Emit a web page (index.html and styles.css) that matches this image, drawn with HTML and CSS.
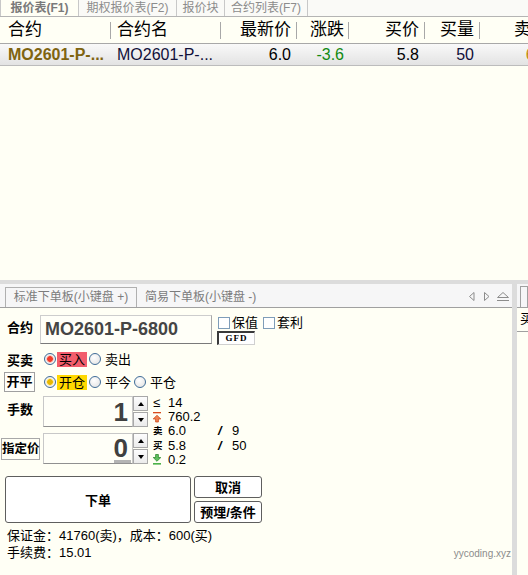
FILE: index.html
```html
<!DOCTYPE html>
<html>
<head>
<meta charset="utf-8">
<link rel="stylesheet" href="styles.css">
</head>
<body>
<div class="quote">
  <div class="qtabs">
    <div class="qtab active">报价表(F1)</div>
    <div class="qtab t2">期权报价表(F2)</div>
    <div class="qtab t3">报价块</div>
    <div class="qtab t4">合约列表(F7)</div>
  </div>
  <div class="qrow qhead">
    <div class="c c1">合约</div>
    <div class="c c2">合约名</div>
    <div class="c c3">最新价</div>
    <div class="c c4">涨跌</div>
    <div class="c c5">买价</div>
    <div class="c c6">买量</div>
    <div class="c c7">卖价</div>
  </div>
  <div class="qrow qdata">
    <div class="c c1 code">MO2601-P-...</div>
    <div class="c c2 name">MO2601-P-...</div>
    <div class="c c3">6.0</div>
    <div class="c c4 down">-3.6</div>
    <div class="c c5">5.8</div>
    <div class="c c6 navy">50</div>
    <div class="c c7 ask">6.0</div>
  </div>
</div>
<div class="band"></div>
<div class="bottom">
  <div class="left">
    <div class="otabs">
      <div class="otab active">标准下单板(小键盘 +)</div>
      <div class="otab t2b">简易下单板(小键盘 -)</div>
      <svg class="arrows" width="41" height="10" viewBox="0 0 41 10">
        <polygon points="6,0.5 6,8.5 1.5,4.5" fill="none" stroke="#8c8c8c" stroke-width="1"/>
        <polygon points="16.5,0.5 16.5,8.5 21,4.5" fill="none" stroke="#8c8c8c" stroke-width="1"/>
        <polygon points="29.5,5.5 35,0.5 40.5,5.5" fill="none" stroke="#8c8c8c" stroke-width="1"/>
        <line x1="29" y1="8.5" x2="41" y2="8.5" stroke="#8c8c8c" stroke-width="1"/>
      </svg>
    </div>
    <div class="form">
      <div class="r1">
        <div class="lbl">合约</div>
        <div class="cinput">MO2601-P-6800</div>
        <div class="opts">
          <div class="chkrow">
            <span class="chk"></span><span class="chklbl">保值</span>
            <span class="chk chk2"></span><span class="chklbl">套利</span>
          </div>
          <div class="gfd">GFD</div>
        </div>
      </div>
      <div class="r2">
        <div class="lbl2">买卖</div>
        <span class="radio on-red"></span><span class="otext hl-red">买入</span>
        <span class="radio g2"></span><span class="otext sp">卖出</span>
      </div>
      <div class="r3">
        <div class="kbtn">开平</div>
        <span class="radio on-yel"></span><span class="otext hl-yel">开仓</span>
        <span class="radio g2"></span><span class="otext sp">平今</span>
        <span class="radio g3"></span><span class="otext sp">平仓</span>
      </div>
      <div class="r4">
        <div class="spins">
          <div class="spin">
            <div class="slbl">手数</div>
            <div class="sinput"><span class="num">1</span></div>
            <div class="sbtns"><div class="sb"><i class="up"></i></div><div class="sb"><i class="dn"></i></div></div>
          </div>
          <div class="spin">
            <div class="slbl2"><div class="zbtn">指定价</div></div>
            <div class="sinput"><span class="num zero">0</span></div>
            <div class="sbtns"><div class="sb"><i class="up"></i></div><div class="sb"><i class="dn"></i></div></div>
          </div>
        </div>
        <div class="info">
          <div class="il"><span class="ic">≤</span><span class="iv">14</span></div>
          <div class="il"><span class="ic"><svg width="8" height="11" viewBox="0 0 8 11"><rect x="0" y="0" width="8" height="1.3" fill="#d84a1c"/><path d="M4 3.2 L7.8 7 H5.4 V10 H2.6 V7 H0.2 Z" fill="#f08050" stroke="#c84010" stroke-width="0.7"/></svg></span><span class="iv">760.2</span></div>
          <div class="il"><span class="ic tiny">卖</span><span class="iv">6.0</span><span class="sl">/</span><span class="iq">9</span></div>
          <div class="il"><span class="ic tiny">买</span><span class="iv">5.8</span><span class="sl">/</span><span class="iq">50</span></div>
          <div class="il"><span class="ic"><svg width="8" height="11" viewBox="0 0 8 11"><path d="M2.6 0.5 H5.4 V3.5 H7.8 L4 7.3 L0.2 3.5 H2.6 Z" fill="#60c060" stroke="#208020" stroke-width="0.7"/><rect x="0" y="9.2" width="8" height="1.3" fill="#20a020"/></svg></span><span class="iv">0.2</span></div>
        </div>
      </div>
      <div class="r5">
        <div class="xbtn">下单</div>
        <div class="btncol">
          <div class="sbtn">取消</div>
          <div class="sbtn">预埋/条件</div>
        </div>
      </div>
      <div class="r6">
        <div class="tl">保证金：41760(卖)，成本：600(买)</div>
        <div class="tl tl2"><span>手续费：15.01</span><span class="wm">yycoding.xyz</span></div>
      </div>
    </div>
  </div>
  <div class="vsep"></div>
  <div class="right">
    <div class="rtop"><div class="rtab"></div></div>
    <div class="rrow">买</div>
  </div>
</div>
</body>
</html>
```
FILE: styles.css
```css
body {
  margin: 0;
  width: 528px;
  height: 575px;
  overflow: hidden;
  background: #fffff5;
  font-family: "Liberation Sans", "Noto Sans CJK SC", sans-serif;
  color: #000;
}

.quote { height: 280px; overflow: hidden; }

.qtabs {
  display: flex;
  height: 16px;
  border-bottom: 1px solid #b4b4b4;
  background: #fafaf7;
}
.qtab {
  flex-shrink: 0;
  font-size: 12px;
  line-height: 16px;
  color: #8c8c8c;
  text-align: center;
  border-right: 1px solid #c8c8c8;
  white-space: nowrap;
}
.qtab.active {
  width: 77px;
  font-weight: bold;
  color: #7a7a7a;
  border-left: 1px solid #c8c8c8;
  background: #fffff5;
}
.t2 { width: 97px; }
.t3 { width: 47px; }
.t4 { width: 82px; }

.qrow { display: flex; width: 528px; overflow: hidden; }
.c {
  flex-shrink: 0;
  box-sizing: border-box;
  white-space: nowrap;
  overflow: hidden;
}
.c1 { width: 111px; padding-left: 8px; }
.c2 { width: 110px; padding-left: 6px; }
.c3 { width: 76px; text-align: right; padding-right: 6px; }
.c4 { width: 52px; text-align: right; padding-right: 5px; }
.c5 { width: 76px; text-align: right; padding-right: 6px; }
.c6 { width: 55px; text-align: right; padding-right: 6px; }
.c7 { width: 74px; text-align: right; padding-right: 6px; }

.qhead { height: 26px; font-size: 17px; line-height: 26px; }
.qhead .c1, .qhead .c2, .qhead .c3, .qhead .c4, .qhead .c5, .qhead .c6 {
  background: linear-gradient(#a8a8a8, #a8a8a8) no-repeat right center / 1px 17px;
}

.qdata {
  height: 21px;
  border-top: 1px solid #a8a8a8;
  border-bottom: 1px solid #bcbcbc;
  background: linear-gradient(#f9f9f9, #e3e3e3);
  font-size: 16px;
  line-height: 21px;
}
.code { font-weight: bold; color: #7f6410; }
.name { color: #10103a; }
.down { color: #128a12; }
.navy { color: #10103a; }
.ask { color: #c08a10; }

.band { height: 4px; background: #dcdcdc; }

.bottom { display: flex; height: 291px; }
.left { width: 512px; }
.vsep { width: 5px; background: #dcdcdc; }
.right { width: 11px; overflow: hidden; }

.otabs {
  display: flex;
  align-items: flex-end;
  height: 23px;
  background: #f6f6f7;
  border-bottom: 1px solid #a0a0a0;
}
.otab {
  font-size: 12px;
  line-height: 19px;
  color: #7c7c7c;
  white-space: nowrap;
}
.otab.active {
  margin-left: 5px;
  width: 132px;
  height: 20px;
  box-sizing: border-box;
  border: 1px solid #b0b0b0;
  border-bottom: none;
  text-align: center;
}
.t2b { margin-left: 8px; }
.arrows { margin-left: auto; margin-right: 3px; align-self: flex-start; margin-top: 8px; }

.form { padding-top: 7px; }

.r1 { display: flex; height: 29px; }
.lbl {
  width: 40px;
  box-sizing: border-box;
  padding-left: 7px;
  font-weight: bold;
  font-size: 13px;
  line-height: 25px;
}
.cinput {
  width: 172px;
  height: 29px;
  box-sizing: border-box;
  border: 1px solid #cdcdcd;
  border-bottom-color: #7a7a7a;
  border-right-color: #a8a8a8;
  background: #fffff8;
  padding-left: 4px;
  font-weight: bold;
  font-size: 18px;
  line-height: 27px;
  color: #454545;
}
.opts { margin-left: 5px; }
.chkrow { display: flex; align-items: center; height: 14px; margin-top: 1px; }
.chk {
  width: 12px;
  height: 12px;
  box-sizing: border-box;
  border: 1px solid #7f9db9;
  background: #fff;
  margin-left: 1px;
}
.chk2 { margin-left: 5px; }
.chklbl { font-size: 13px; margin-left: 2px; line-height: 14px; }
.gfd {
  margin-top: 1px;
  width: 38px;
  height: 14px;
  box-sizing: border-box;
  border: 1px solid #d0d0d0;
  border-left: 2px solid #3a3a3a;
  border-top: 2px solid #3a3a3a;
  background: #fff;
  font-family: "Liberation Serif", serif;
  font-weight: bold;
  font-size: 9px;
  line-height: 11px;
  letter-spacing: 1px;
  text-align: center;
}

.r2, .r3 { display: flex; align-items: center; }
.r2 { height: 16px; margin-top: 7px; }
.r3 { height: 20px; margin-top: 5px; }
.lbl2 {
  width: 44px;
  box-sizing: border-box;
  padding-left: 7px;
  font-weight: bold;
  font-size: 13px;
}
.kbtn {
  margin-left: 4px;
  width: 31px;
  height: 20px;
  box-sizing: border-box;
  border: 1px solid #a0a0a0;
  background: #fffffa;
  font-weight: bold;
  font-size: 13px;
  line-height: 18px;
  text-align: center;
  margin-right: 9px;
}
.radio {
  width: 12px;
  height: 12px;
  box-sizing: border-box;
  border-radius: 50%;
  border: 1px solid #3f6c98;
  background: radial-gradient(circle at 40% 35%, #ffffff 0%, #e6e6e6 80%);
  flex-shrink: 0;
}
.radio.on-red { background: radial-gradient(circle, #f03a2a 0 2.5px, #ff9a8a 3px, #f4f4f4 4px, #e6e6e6 100%); }
.radio.on-yel { background: radial-gradient(circle, #e8b800 0 2.5px, #ffe070 3px, #f4f4f4 4px, #e6e6e6 100%); }
.otext { font-size: 13px; line-height: 15px; padding: 0 2px; margin-left: 1px; }
.hl-red { background: #f25d6c; }
.hl-yel { background: #ffd800; }
.radio.g2 { margin-left: 2px; }
.radio.g3 { margin-left: 1px; }
.sp { margin-left: 2px; }

.r4 { display: flex; margin-top: 4px; }
.spins { width: 148px; flex-shrink: 0; }
.spin { display: flex; height: 31px; }
.spin + .spin { margin-top: 6px; }
.slbl {
  width: 43px;
  box-sizing: border-box;
  padding-left: 7px;
  font-weight: bold;
  font-size: 13px;
  line-height: 27px;
}
.slbl2 { width: 43px; display: flex; align-items: center; }
.zbtn {
  margin-left: 1px;
  width: 39px;
  height: 22px;
  box-sizing: border-box;
  border: 1px solid #a8a8a8;
  background: #fffff5;
  font-weight: bold;
  font-size: 12.5px;
  line-height: 20px;
  text-align: center;
  white-space: nowrap;
}
.sinput {
  width: 90px;
  height: 31px;
  box-sizing: border-box;
  border: 1px solid #c8c8c8;
  border-bottom-color: #909090;
  background: #fffff8;
  display: flex;
  align-items: center;
  justify-content: flex-end;
  padding-right: 4px;
}
.num {
  font-weight: bold;
  font-size: 26px;
  line-height: 24px;
  color: #404040;
}
.zero {
  padding-right: 3px;
  margin-right: -3px;
  border-bottom: 3px solid #b4b4b4;
  margin-top: 2px;
}
.sbtns { width: 15px; display: flex; flex-direction: column; gap: 1px; }
.sb {
  height: 15px;
  box-sizing: border-box;
  border: 1px solid #a8a8a8;
  background: linear-gradient(#fdfdfd, #ebebeb);
  display: flex;
  align-items: center;
  justify-content: center;
}
.up, .dn { width: 0; height: 0; border-left: 3px solid transparent; border-right: 3px solid transparent; }
.up { border-bottom: 4px solid #000; }
.dn { border-top: 4px solid #000; }

.info { margin-left: 4px; font-size: 13px; line-height: 14.2px; }
.il { display: flex; align-items: center; height: 14.2px; white-space: nowrap; }
.ic { width: 16px; padding-left: 1px; box-sizing: border-box; display: flex; align-items: center; }
.ic.tiny { font-size: 9.5px; font-weight: bold; }
.iv { width: 50px; }
.sl { width: 14px; font-weight: bold; font-style: italic; }

.r5 { display: flex; margin-top: 9px; }
.xbtn {
  margin-left: 5px;
  width: 186px;
  height: 47px;
  box-sizing: border-box;
  border: 1px solid #5e5e5e;
  border-radius: 3px;
  background: #fff;
  font-weight: bold;
  font-size: 13px;
  display: flex;
  align-items: center;
  justify-content: center;
}
.btncol { margin-left: 3px; display: flex; flex-direction: column; gap: 3px; }
.sbtn {
  width: 68px;
  height: 22px;
  box-sizing: border-box;
  border: 1px solid #5e5e5e;
  border-radius: 3px;
  background: #fff;
  font-weight: bold;
  font-size: 13px;
  display: flex;
  align-items: center;
  justify-content: center;
}

.r6 { margin-top: 4px; padding-left: 7px; font-size: 13px; line-height: 17px; }
.tl2 { display: flex; align-items: baseline; }
.wm { margin-left: auto; margin-right: 1px; font-size: 10px; color: #8c8c8c; }

.rtop {
  height: 23px;
  background: #f6f6f7;
  border-bottom: 1px solid #a0a0a0;
  display: flex;
  align-items: flex-end;
}
.rtab {
  margin-left: 3px;
  width: 20px;
  height: 21px;
  box-sizing: border-box;
  border: 1px solid #a0a0a0;
  border-bottom: none;
}
.rrow {
  height: 23px;
  border-bottom: 1px solid #a0a0a0;
  padding-left: 3px;
  font-size: 13px;
  line-height: 22px;
  white-space: nowrap;
}
```
